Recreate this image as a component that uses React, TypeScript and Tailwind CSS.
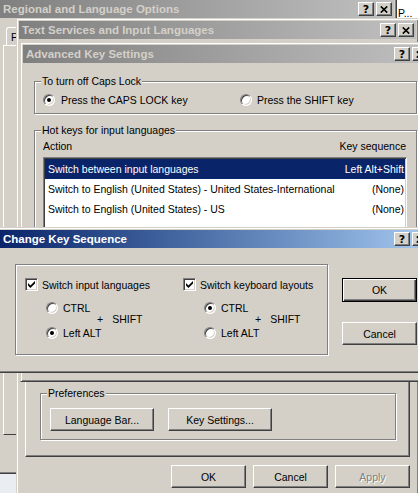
import clsx from "clsx";
import type { ReactNode } from "react";

// classic 3d bevels
const raised =
  "border border-t-white border-l-white border-r-[#404040] border-b-[#404040] shadow-[inset_-1px_-1px_0_#808080]";
const sunken =
  "border border-t-[#808080] border-l-[#808080] border-r-white border-b-white shadow-[inset_1px_1px_0_#404040,inset_-1px_-1px_0_#d4d0c8]";
const frame =
  "absolute flex flex-col bg-[#d4d0c8] border border-t-[#d4d0c8] border-l-[#d4d0c8] border-r-[#404040] border-b-[#404040] shadow-[inset_1px_1px_0_#fff,inset_-1px_-1px_0_#808080] p-[2px]";
const etched = "border border-[#808080] shadow-[inset_1px_1px_0_#fff,1px_1px_0_#fff]";

const CapBtn = ({ children }: { children: ReactNode }) => (
  <div className={clsx(raised, "w-[16px] h-[14px] bg-[#d4d0c8] flex items-center justify-center text-black")}>
    {children}
  </div>
);

const TitleBar = ({ title, active }: { title: string; active?: boolean }) => (
  <div
    className={clsx(
      "h-[18px] shrink-0 flex items-center pl-[3px] pr-[2px]",
      active
        ? "bg-linear-to-r from-[#0a246a] to-[#a6caf0] text-white"
        : "bg-linear-to-r from-[#808080] to-[#c0c0c0] text-[#d4d0c8]"
    )}
  >
    <span className="flex-1 whitespace-nowrap font-bold text-[11.5px] leading-[14px]">{title}</span>
    <div className="flex gap-[2px]">
      <CapBtn>
        <span className="font-bold text-[11px] leading-none font-['DejaVu_Sans',sans-serif]">?</span>
      </CapBtn>
      <CapBtn>
        <svg width="8" height="7" viewBox="0 0 8 7">
          <path d="M0.8 0.4 L7.2 6.6 M7.2 0.4 L0.8 6.6" stroke="black" strokeWidth="1.6" />
        </svg>
      </CapBtn>
    </div>
  </div>
);

const Radio = ({ on }: { on?: boolean }) => (
  <span className={clsx(sunken, "w-[12px] h-[12px] shrink-0 rounded-full bg-white flex items-center justify-center")}>
    {on && <span className="w-[4px] h-[4px] rounded-full bg-black" />}
  </span>
);

const Check = ({ on }: { on?: boolean }) => (
  <span className={clsx(sunken, "w-[13px] h-[13px] shrink-0 bg-white flex items-center justify-center")}>
    {on && (
      <svg width="7" height="7" viewBox="0 0 7 7">
        <polygon points="0,2 2.4,4.4 7,0 7,2.6 2.4,7 0,4.6" fill="black" />
      </svg>
    )}
  </span>
);

const Btn = ({
  children,
  className,
  primary,
  disabled,
}: {
  children: ReactNode;
  className?: string;
  primary?: boolean;
  disabled?: boolean;
}) => (
  <div
    className={clsx(
      "h-[23px] flex items-center justify-center bg-[#d4d0c8] leading-[12px]",
      primary
        ? "border border-black shadow-[inset_1px_1px_0_#fff,inset_-1px_-1px_0_#404040,inset_-2px_-2px_0_#808080]"
        : raised,
      disabled ? "text-[#808080] [text-shadow:1px_1px_0_#fff]" : "text-black",
      className
    )}
  >
    {children}
  </div>
);

const Group = ({
  label,
  className,
  children,
}: {
  label?: string;
  className?: string;
  children?: ReactNode;
}) => (
  <fieldset className={clsx(etched, "shrink-0 min-w-0", className)}>
    {label && (
      <legend className="ml-[6px] px-[1px] bg-[#d4d0c8] leading-[12px] whitespace-nowrap">{label}</legend>
    )}
    {children}
  </fieldset>
);

const rows = [
  ["Switch between input languages", "Left Alt+Shift"],
  ["Switch to English (United States) - United States-International", "(None)"],
  ["Switch to English (United States) - US", "(None)"],
];

export default function App() {
  return (
    <div className="relative w-[418px] h-[493px] overflow-hidden bg-[#eaeef2] font-['Liberation_Sans',Arial,sans-serif] text-[10.5px] leading-[12px] text-black">
      {/* window peeking out top right */}
      <div className="absolute left-[396px] top-0 w-[40px] h-[24px] bg-white pl-[2px] pt-[7px]">P...</div>

      {/* Regional and Language Options */}
      <div className={clsx(frame, "left-[-3px] top-[-3px] w-[400px] h-[477px]")}>
        <TitleBar title="Regional and Language Options" />
        <div className="h-[27px] flex items-end">
          <div className="ml-[6px] w-[14px] h-[18px] border-t border-l border-white rounded-tl-[3px] pl-[4px] pt-[3px] overflow-hidden">
            F
          </div>
        </div>
        <div className="ml-[3px] h-[390px] border border-t-white border-l-white border-r-[#404040] border-b-[#404040]" />
      </div>

      {/* Text Services and Input Languages */}
      <div className={clsx(frame, "left-[16px] top-[18px] w-[403px] h-[480px]")}>
        <TitleBar title="Text Services and Input Languages" />
        <div className="h-[21px] flex items-end pl-[8px] gap-[2px]">
          <div className="w-[60px] h-[18px] border-t border-l border-white" />
          <div className="w-[60px] h-[16px] border-t border-l border-white" />
        </div>
        <div className="ml-[6px] w-[385px] h-[397px] shrink-0 flex flex-col pl-[14px] pt-[13px] border border-t-white border-l-white border-r-[#404040] border-b-[#404040] shadow-[inset_-1px_-1px_0_#808080]">
          <Group className="w-[357px] h-[303px]" />
          <Group label="Preferences" className="mt-[10px] w-[356px] h-[53px]">
            <div className="flex gap-[14px] pl-[9px] mt-[9px]">
              <Btn className="w-[104px]">Language Bar...</Btn>
              <Btn className="w-[104px]">Key Settings...</Btn>
            </div>
          </Group>
        </div>
        <div className="flex justify-end gap-[7px] pr-[6px] mt-[8px]">
          <Btn className="w-[75px]">OK</Btn>
          <Btn className="w-[75px]">Cancel</Btn>
          <Btn className="w-[75px]" disabled>
            Apply
          </Btn>
        </div>
      </div>

      {/* Advanced Key Settings */}
      <div className={clsx(frame, "left-[20px] top-[42px] w-[413px] h-[340px]")}>
        <TitleBar title="Advanced Key Settings" />
        <Group label="To turn off Caps Lock" className="ml-[11px] mt-[12px] w-[383px]">
          <div className="flex items-center h-[14px] mt-[6px] mb-[6px] pl-[8px]">
            <label className="w-[197px] flex items-center gap-[6px] whitespace-nowrap">
              <Radio on />
              Press the CAPS LOCK key
            </label>
            <label className="flex items-center gap-[5px] whitespace-nowrap">
              <Radio />
              Press the SHIFT key
            </label>
          </div>
        </Group>
        <Group label="Hot keys for input languages" className="ml-[11px] mt-[10px] w-[383px] h-[200px]">
          <div className="pl-[8px] pr-[9px]">
            <div className="flex justify-between mt-[4px] pr-[1px]">
              <span>Action</span>
              <span>Key sequence</span>
            </div>
            <div className={clsx(sunken, "mt-[5px] h-[120px] bg-white p-[1px]")}>
              {rows.map(([a, k], i) => (
                <div
                  key={a}
                  className={clsx(
                    "h-[20px] flex items-center justify-between pl-[3px] pr-[1px] whitespace-nowrap",
                    i === 0 && "bg-[#0a246a] text-white"
                  )}
                >
                  <span>{a}</span>
                  <span>{k}</span>
                </div>
              ))}
            </div>
          </div>
        </Group>
      </div>

      {/* Change Key Sequence */}
      <div className={clsx(frame, "left-[-3px] top-[227px] w-[436px] h-[146px]")}>
        <TitleBar title="Change Key Sequence" active />
        <div className="flex">
          <Group className="ml-[15px] mt-[16px] w-[313px] h-[91px]">
            <div className="flex pl-[9px] pt-[13px]">
              {[
                { label: "Switch input languages", ctrl: false },
                { label: "Switch keyboard layouts", ctrl: true },
              ].map((col, i) => (
                <div key={col.label} className={clsx("flex flex-col", i === 0 && "w-[158px]")}>
                  <label className="flex items-center gap-[4px] whitespace-nowrap h-[13px]">
                    <Check on />
                    {col.label}
                  </label>
                  <div className="flex ml-[21px] mt-[10px]">
                    <div className="w-[51px] flex flex-col gap-[11px]">
                      <label className="flex items-center gap-[5px] h-[14px] whitespace-nowrap">
                        <Radio on={col.ctrl} />
                        CTRL
                      </label>
                      <label className="flex items-center gap-[5px] h-[14px] whitespace-nowrap">
                        <Radio on={!col.ctrl} />
                        Left ALT
                      </label>
                    </div>
                    <div className="self-center flex -mt-[3px] whitespace-nowrap">
                      <span>+</span>
                      <span className="ml-[9px]">SHIFT</span>
                    </div>
                  </div>
                </div>
              ))}
            </div>
          </Group>
          <div className="ml-[14px] mt-[30px] flex flex-col gap-[20px]">
            <Btn className="w-[75px] h-[24px]" primary>
              OK
            </Btn>
            <Btn className="w-[75px]">Cancel</Btn>
          </div>
        </div>
      </div>
    </div>
  );
}
